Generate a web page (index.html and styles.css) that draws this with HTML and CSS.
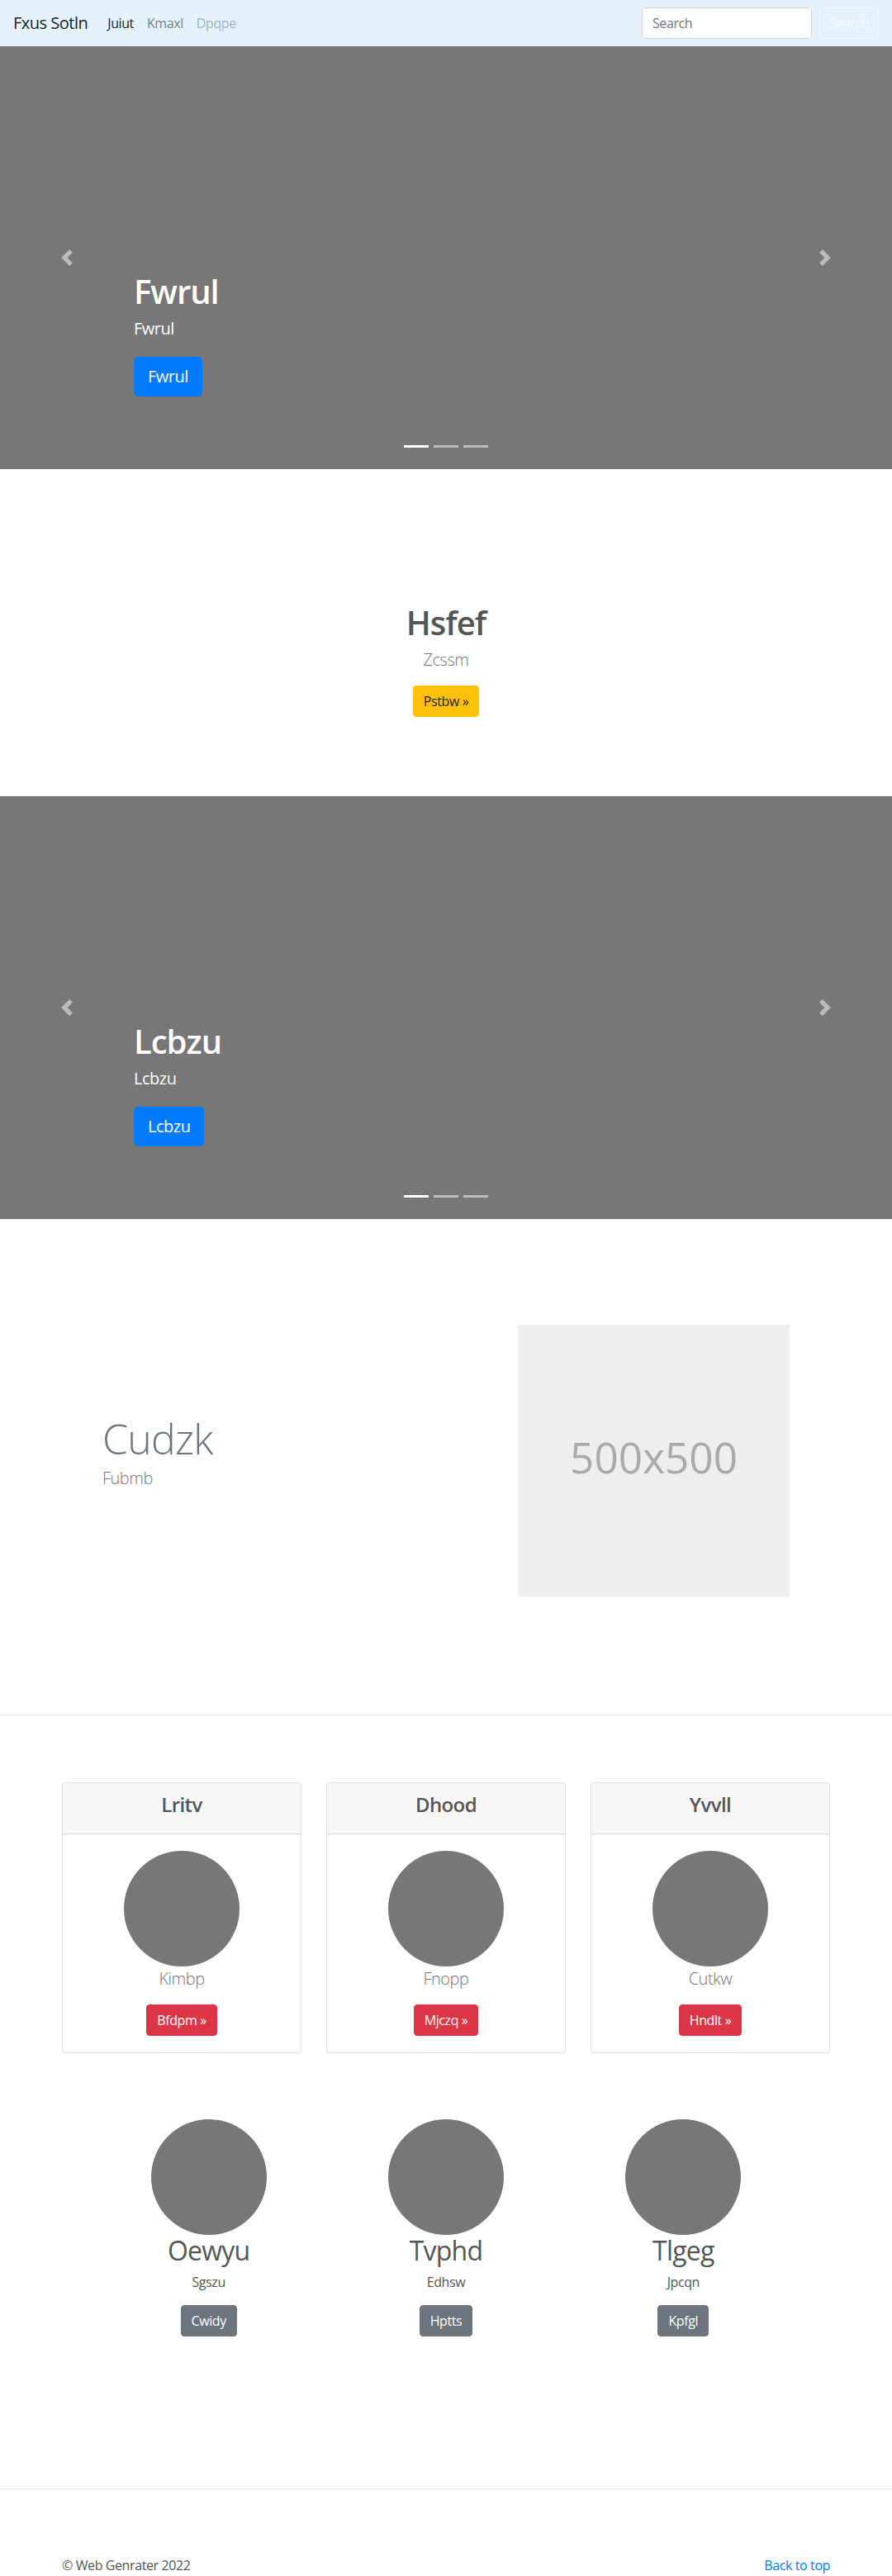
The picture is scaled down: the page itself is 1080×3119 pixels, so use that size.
FILE: index.html
```html
<!DOCTYPE html>
<html lang="en">
<head>
<meta charset="utf-8">
<title>Fxus Sotln</title>
<link rel="stylesheet" href="styles.css">
</head>
<body>
<nav class="navbar">
  <a class="brand" href="#">Fxus Sotln</a>
  <ul class="nav">
    <li><a class="nav-link active" href="#">Juiut</a></li>
    <li><a class="nav-link" href="#">Kmaxl</a></li>
    <li><a class="nav-link disabled" href="#">Dpqpe</a></li>
  </ul>
  <form class="search">
    <input class="search-input" type="text" placeholder="Search">
    <button class="search-btn" type="button">Search</button>
  </form>
</nav>

<section class="carousel">
  <a class="control control-prev" href="#"><svg class="control-icon" viewBox="0 0 8 8"><path d="M5.25 0l-4 4 4 4 1.5-1.5L4.25 4l2.5-2.5L5.25 0z"/></svg></a>
  <a class="control control-next" href="#"><svg class="control-icon" viewBox="0 0 8 8"><path d="M2.75 0l-1.5 1.5L3.75 4l-2.5 2.5L2.75 8l4-4-4-4z"/></svg></a>
  <div class="caption">
    <h1 class="caption-title">Fwrul</h1>
    <p class="caption-text">Fwrul</p>
    <div class="caption-cta"><a class="btn btn-lg btn-primary" href="#">Fwrul</a></div>
  </div>
  <ol class="indicators"><li class="indicator on"></li><li class="indicator"></li><li class="indicator"></li></ol>
</section>

<section class="hero">
  <h1 class="hero-title">Hsfef</h1>
  <p class="lead hero-lead">Zcssm</p>
  <div class="btn-row"><a class="btn btn-warning" href="#">Pstbw &raquo;</a></div>
</section>

<section class="carousel">
  <a class="control control-prev" href="#"><svg class="control-icon" viewBox="0 0 8 8"><path d="M5.25 0l-4 4 4 4 1.5-1.5L4.25 4l2.5-2.5L5.25 0z"/></svg></a>
  <a class="control control-next" href="#"><svg class="control-icon" viewBox="0 0 8 8"><path d="M2.75 0l-1.5 1.5L3.75 4l-2.5 2.5L2.75 8l4-4-4-4z"/></svg></a>
  <div class="caption">
    <h1 class="caption-title">Lcbzu</h1>
    <p class="caption-text">Lcbzu</p>
    <div class="caption-cta"><a class="btn btn-lg btn-primary" href="#">Lcbzu</a></div>
  </div>
  <ol class="indicators"><li class="indicator on"></li><li class="indicator"></li><li class="indicator"></li></ol>
</section>

<section class="featurette-section">
  <div class="featurette">
    <div class="featurette-text">
      <h2 class="featurette-heading">Cudzk</h2>
      <p class="lead featurette-lead">Fubmb</p>
    </div>
    <div class="featurette-media">
      <svg class="placeholder" viewBox="0 0 500 500" preserveAspectRatio="xMidYMid slice">
        <rect width="100%" height="100%" fill="#eee"/>
        <text class="placeholder-text" x="50%" y="50%" dy=".3em" text-anchor="middle">500x500</text>
      </svg>
    </div>
  </div>
</section>

<hr class="divider">

<section class="cards-section">
  <div class="cards">
    <div class="card-col">
      <div class="card">
        <div class="card-header"><h4 class="card-title">Lritv</h4></div>
        <div class="card-body">
          <div class="circle"></div>
          <p class="lead card-lead">Kimbp</p>
          <div class="btn-row"><a class="btn btn-danger" href="#">Bfdpm &raquo;</a></div>
        </div>
      </div>
    </div>
    <div class="card-col">
      <div class="card">
        <div class="card-header"><h4 class="card-title">Dhood</h4></div>
        <div class="card-body">
          <div class="circle"></div>
          <p class="lead card-lead">Fnopp</p>
          <div class="btn-row"><a class="btn btn-danger" href="#">Mjczq &raquo;</a></div>
        </div>
      </div>
    </div>
    <div class="card-col">
      <div class="card">
        <div class="card-header"><h4 class="card-title">Yvvll</h4></div>
        <div class="card-body">
          <div class="circle"></div>
          <p class="lead card-lead">Cutkw</p>
          <div class="btn-row"><a class="btn btn-danger" href="#">Hndlt &raquo;</a></div>
        </div>
      </div>
    </div>
  </div>
</section>

<section class="marketing-section">
  <div class="marketing">
    <div class="marketing-col">
      <div class="circle"></div>
      <h2 class="marketing-title">Oewyu</h2>
      <p class="marketing-text">Sgszu</p>
      <div class="btn-row"><a class="btn btn-secondary" href="#">Cwidy</a></div>
    </div>
    <div class="marketing-col">
      <div class="circle"></div>
      <h2 class="marketing-title">Tvphd</h2>
      <p class="marketing-text">Edhsw</p>
      <div class="btn-row"><a class="btn btn-secondary" href="#">Hptts</a></div>
    </div>
    <div class="marketing-col">
      <div class="circle"></div>
      <h2 class="marketing-title">Tlgeg</h2>
      <p class="marketing-text">Jpcqn</p>
      <div class="btn-row"><a class="btn btn-secondary" href="#">Kpfgl</a></div>
    </div>
  </div>
</section>

<hr class="divider">

<footer class="footer">
  <p class="footer-copy">&copy; Web Genrater 2022</p>
  <p class="footer-top"><a class="footer-link" href="#">Back to top</a></p>
</footer>
</body>
</html>
```

FILE: styles.css
```css
* {
  box-sizing: border-box;
  letter-spacing: -0.025em;
}

body {
  margin: 0;
  font-family: "Open Sans", "Noto Sans", "Liberation Sans", sans-serif;
  font-size: 16px;
  line-height: 1.5;
  color: #555;
  background: #fff;
}

/* navbar */
.navbar {
  display: flex;
  align-items: center;
  height: 56px;
  padding: 8px 16px;
  background: #e3f2fd;
}
.brand {
  font-size: 20px;
  line-height: 30px;
  padding: 5px 0;
  margin-right: 16px;
  color: rgba(0, 0, 0, .9);
  text-decoration: none;
}
.nav {
  display: flex;
  flex: 1;
  list-style: none;
  margin: 0;
  padding: 0;
}
.nav-link {
  display: block;
  padding: 8px;
  color: rgba(0, 0, 0, .5);
  text-decoration: none;
}
.nav-link.active { color: rgba(0, 0, 0, .9); }
.nav-link.disabled { color: rgba(0, 0, 0, .3); }
.search {
  display: flex;
  align-items: center;
  gap: 9px;
  margin: 0;
}
.search-input {
  width: 206px;
  height: 38px;
  padding: 6px 12px;
  font-family: inherit;
  font-size: 16px;
  color: #495057;
  background: #fff;
  border: 1px solid #ced4da;
  border-radius: 4px;
}
.search-input::placeholder { color: #6c757d; }
.search-btn {
  width: 72px;
  height: 38px;
  padding: 0;
  font-family: inherit;
  font-size: 16px;
  color: #f8f9fa;
  background: transparent;
  border: 1px solid #f8f9fa;
  border-radius: 4px;
}

/* carousel */
.carousel {
  position: relative;
  height: 512px;
  background: #777;
  overflow: hidden;
}
.control {
  position: absolute;
  top: 0;
  bottom: 0;
  width: 15%;
  display: flex;
  align-items: center;
  justify-content: center;
  opacity: .5;
}
.control-prev { left: 0; }
.control-next { right: 0; }
.control-icon {
  width: 20px;
  height: 20px;
  fill: #fff;
}
.caption {
  position: absolute;
  left: 15%;
  right: 15%;
  bottom: 48px;
  padding: 20px 0;
  color: #fff;
  z-index: 10;
}
.caption-title {
  margin: 0 0 6px;
  font-size: 40px;
  line-height: 48px;
  font-weight: 600;
}
.caption-text {
  margin: 0 0 19px;
  font-size: 20px;
  line-height: 30px;
}
.caption-cta {
  display: flex;
  margin-bottom: 20px;
}
.indicators {
  position: absolute;
  left: 0;
  right: 0;
  bottom: 26px;
  display: flex;
  justify-content: center;
  margin: 0;
  padding: 0;
  list-style: none;
}
.indicator {
  width: 30px;
  height: 3px;
  margin: 0 3px;
  background: #fff;
  opacity: .5;
}
.indicator.on { opacity: 1; }

/* buttons */
.btn-row {
  display: flex;
  justify-content: center;
}
.btn {
  display: inline-block;
  padding: 6px 12px;
  font-size: 16px;
  line-height: 24px;
  border: 1px solid transparent;
  border-radius: 4px;
  text-decoration: none;
  color: #fff;
}
.btn-lg {
  padding: 8px 16px;
  font-size: 20px;
  line-height: 30px;
  border-radius: 5px;
}
.btn-primary { background: #007bff; border-color: #007bff; }
.btn-warning { background: #ffc107; border-color: #ffc107; color: #212529; }
.btn-danger { background: #dc3545; border-color: #dc3545; }
.btn-secondary { background: #6c757d; border-color: #6c757d; }

.lead {
  font-size: 20px;
  line-height: 30px;
  font-weight: 300;
  color: #6c757d;
}

/* hero */
.hero {
  text-align: center;
  padding: 162px 0 96px;
}
.hero-title {
  margin: 0 0 6px;
  font-size: 40px;
  line-height: 48px;
  font-weight: 600;
  color: #555;
}
.hero-lead { margin: 0 0 16px; }

/* featurette */
.featurette-section {
  padding: 128px 0 143px;
}
.featurette {
  width: 862px;
  margin: 0 auto;
  display: flex;
  align-items: center;
}
.featurette-text {
  flex: 0 0 58.3333%;
  padding: 0 15px;
}
.featurette-media {
  flex: 0 0 41.6667%;
  padding: 0 15px;
}
.featurette-heading {
  margin: 0 0 8px;
  font-size: 50px;
  line-height: 1;
  font-weight: 300;
  letter-spacing: -0.05rem;
  color: #6c757d;
}
.featurette-lead { margin: 0 0 16px; }
.placeholder {
  display: block;
  width: 100%;
  height: auto;
}
.placeholder-text {
  fill: #aaa;
  font-family: "Open Sans", "Noto Sans", sans-serif;
  font-size: 78px;
  letter-spacing: 0;
}

.divider {
  margin: 0;
  border: 0;
  border-top: 1px solid rgba(0, 0, 0, .1);
}

/* cards */
.cards-section {
  padding: 81px 0 80px;
}
.cards {
  width: 960px;
  margin: 0 auto;
  display: flex;
}
.card-col {
  flex: 0 0 33.3333%;
  padding: 0 15px;
}
.card {
  border: 1px solid rgba(0, 0, 0, .125);
  border-radius: 4px;
  text-align: center;
  overflow: hidden;
}
.card-header {
  padding: 12px 20px;
  background: rgba(0, 0, 0, .03);
  border-bottom: 1px solid rgba(0, 0, 0, .125);
}
.card-title {
  margin: 0 0 8px;
  font-size: 24px;
  line-height: 28.8px;
  font-weight: 600;
  color: #555;
}
.card-body { padding: 20px; }
.card-lead { margin: 0 0 16px; }
.circle {
  width: 140px;
  height: 140px;
  margin: 0 auto;
  border-radius: 50%;
  background: #777;
}

/* marketing */
.marketing-section {
  padding: 0 0 184px;
}
.marketing {
  width: 862px;
  margin: 0 auto;
  display: flex;
  text-align: center;
}
.marketing-col {
  flex: 1;
  padding: 0 15px;
}
.marketing-title {
  margin: 0 0 7px;
  font-size: 32px;
  line-height: 38.4px;
  font-weight: 400;
  color: #555;
}
.marketing-text { margin: 0 0 16px; }

/* footer */
.footer {
  width: 960px;
  margin: 0 auto;
  padding: 80px 15px 0;
  display: flex;
  justify-content: space-between;
}
.footer-copy, .footer-top { margin: 0 0 16px; }
.footer-link {
  color: #007bff;
  text-decoration: none;
}
```
